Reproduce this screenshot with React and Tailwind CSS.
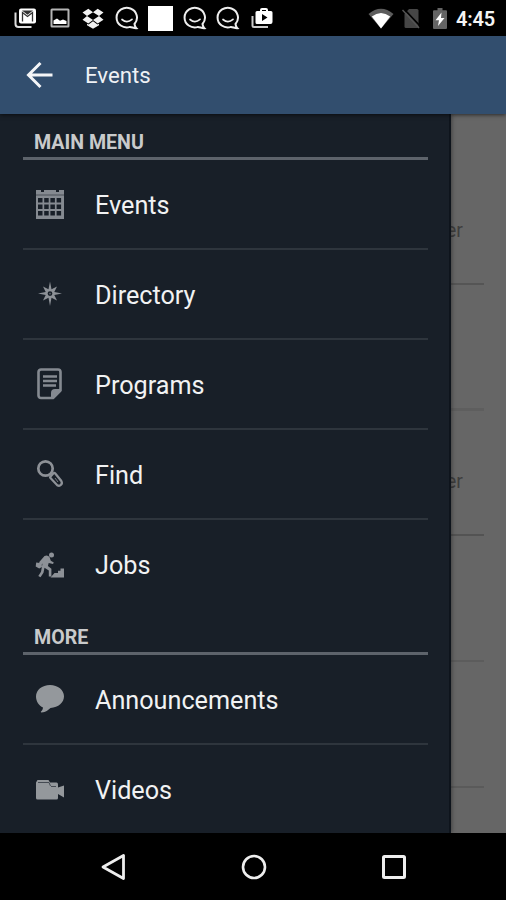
const MAIN_ITEMS = [
  { label: 'Events', Icon: CalendarIcon },
  { label: 'Directory', Icon: CompassIcon },
  { label: 'Programs', Icon: NoteIcon },
  { label: 'Find', Icon: SearchIcon },
  { label: 'Jobs', Icon: JobsIcon },
];

const MORE_ITEMS = [
  { label: 'Announcements', Icon: BubbleIcon },
  { label: 'Videos', Icon: VideoIcon },
];

function CalendarIcon() {
  return (
    <svg width="30" height="30" viewBox="0 0 30 30" fill="#858a91">
      <path
        fillRule="evenodd"
        d="M1 1h5v2h3V1h12v2h3V1h5v29H1zM3 9v4.500h4.500V9zm6.200 0v4.500h4.500V9zm6.200 0v4.500h4.500V9zm6.200 0v4.500h4.500V9zM3 15.500V20h4.500v-4.500zm6.200 0V20h4.500v-4.500zm6.200 0V20h4.500v-4.500zm6.200 0V20h4.500v-4.500zM3 22v4.500h4.500V22zm6.200 0v4.500h4.500V22zm6.200 0v4.500h4.500V22zm6.200 0v4.500h4.500V22z"
      />
      <path d="M1 6h28" stroke="#4a5058" strokeWidth="1" />
    </svg>
  );
}

function CompassIcon() {
  return (
    <svg width="30" height="30" viewBox="0 0 30 30" fill="#8d9197">
      <path
        fillRule="evenodd"
        d="M15 2.500l1.500 7.700 5.500-2.700-2.700 5.500 7.700 1.500-7.700 1.500 2.700 5.500-5.500-2.700L15 27l-1.500-8.200L8 21.500l2.700-5.500L3 14.500 10.700 13 8 7.500l5.500 2.700zM15 12.200a2.400 2.400 0 1 0 0 4.800 2.400 2.400 0 0 0 0-4.800z"
      />
      <circle cx="15" cy="14.600" r="0.9" fill="#5f656d" />
    </svg>
  );
}

function NoteIcon() {
  return (
    <svg width="30" height="34" viewBox="0 0 30 34" fill="none" stroke="#858a91">
      <path
        d="M6 2.500h17a2.500 2.500 0 0 1 2.500 2.500v18.500L18 31H6a2.500 2.500 0 0 1-2.500-2.500V5A2.500 2.500 0 0 1 6 2.500z"
        strokeWidth="2.600"
      />
      <path d="M8 9.500h14M8 14h14M8 18.500h13" strokeWidth="2.500" />
      <path d="M16 31v-5q0-4 4-4h6v2.500L19 31.500z" fill="#858a91" stroke="none" />
    </svg>
  );
}

function SearchIcon() {
  return (
    <svg width="30" height="30" viewBox="0 0 30 30" fill="none" stroke="#8d9197">
      <circle cx="10.500" cy="9.500" r="7.200" strokeWidth="2.700" />
      <path
        d="M15.500 17.500l3-3.200q1-.6 1.800.3l6 7.400q1.300 2.100-.3 3.800t-3.800.4L15.500 19q-.8-.8 0-1.500z"
        strokeWidth="2.300"
      />
      <path d="M20 19l3 4" strokeWidth="0.8" />
    </svg>
  );
}

function JobsIcon() {
  return (
    <svg width="30" height="28" viewBox="0 0 30 28" fill="#8d9197">
      <circle cx="16.500" cy="4" r="2.500" />
      <path d="M9.500 5q3-1.500 5 1l1.300 3.700 3 1.700-.8 1.700-4.300-1.200-.8 3.100 3.500 2.700v7.800h-2.600v-6l-4.300-2.700-1 5-3 4.500-2.200-1.300 2.700-4.300 1.500-8.200-1.500 1.500-1.500 1.500-1.200-1 1.200-3.700z" />
      <path d="M1.200 11.500l5.300.7.5 3.800-2.800 1.500-3.500-2z" />
      <path d="M15.500 26.500l4-4.500H23v-2.300h2.500v-2.200H29v9z" />
    </svg>
  );
}

function BubbleIcon() {
  return (
    <svg width="30" height="30" viewBox="0 0 30 30" fill="#94989c">
      <path d="M15 1c8 0 14 5 14 11.300S23.500 23.600 15.500 24c-2.500 2-4.500 4.300-9 4.500-1-.3-.8-1 0-1.500 1-.8 1.300-2 1.500-3.500C4 21.800 1 17.500 1 12.500 1 6 7 1 15 1z" />
    </svg>
  );
}

function VideoIcon() {
  return (
    <svg width="30" height="24" viewBox="0 0 30 24" fill="#94989c">
      <path d="M1 4.500L2.500 2h11L15 4.500h6.500q1.500 0 1.500 2v3L29 7.500v12l-6-3.500v4q0 1.500-1.500 1.500h-19Q1 21.500 1 20z" />
      <path d="M3 4.500h11l1.500 3.500M16 8.500h5" stroke="#454b53" strokeWidth="1" fill="none" />
    </svg>
  );
}

function MailIcon() {
  return (
    <svg width="23" height="22" viewBox="0 0 23 22">
      <path d="M1.500 5.500V17q0 3 3 3h13" fill="none" stroke="#ddd" strokeWidth="2" />
      <rect x="5" y="1.500" width="17" height="15" rx="2" fill="#fff" />
      <path d="M8.500 14.500V5.500l5 4 5-4v9" fill="none" stroke="#333" strokeWidth="1.300" />
      <path d="M8 3.500h11l-5.500 4.300z" fill="#333" />
    </svg>
  );
}

function PhotoIcon() {
  return (
    <svg width="20" height="20" viewBox="0 0 20 20">
      <rect x="1.500" y="1.500" width="17" height="17" rx="0.5" fill="none" stroke="#b4b4b4" strokeWidth="2" />
      <path d="M3.500 16v-3.500l3.500-2 3 2.200 3-1.200 3.500 1.500v3z" fill="#fff" />
    </svg>
  );
}

function DropboxIcon() {
  return (
    <svg width="22" height="21" viewBox="0 0 22 21" fill="#f2f2f2">
      <path d="M6.300.7L11 4.200 5 8 .5 4.500zM15.700.7L11 4.200 17 8l4.500-3.500zM.5 11.700L5 8l6 3.900-4.700 3.500zM21.500 11.700L17 8l-6 3.900 4.700 3.500zM11 13.300l4.500 3.300 1.500-.9v1.500l-6 3.500-6-3.500v-1.500l1.500.9z" />
    </svg>
  );
}

function ChatIcon() {
  return (
    <svg width="24" height="24" viewBox="0 0 24 24" fill="none" stroke="#eee" strokeLinecap="round">
      <path d="M19.500 18a10.200 9.800 0 1 0-4.500 2.900c2 .2 4 1.600 6.300 1.400-1.200-1.200-1.500-2.500-1.800-4.300z" strokeWidth="2" />
      <path d="M7 13.500q5 4.300 10-.1" strokeWidth="1.700" />
    </svg>
  );
}

function PlayCaseIcon() {
  return (
    <svg width="22" height="22" viewBox="0 0 22 22">
      <path d="M1.500 9v9.500q0 1.500 1.500 1.500h14" fill="none" stroke="#ccc" strokeWidth="2" />
      <path
        fillRule="evenodd"
        fill="#fff"
        d="M9 4V3q0-2 2-2h4q2 0 2 2v1h3q1.500 0 1.500 1.500v9.500q0 2-2 2H6q-1.500 0-1.500-1.500v-10Q4.500 4 6 4zm2-1v1h4V3zm0 4v7l5.500-3.500z"
      />
    </svg>
  );
}

function StatusBar() {
  const icons = [MailIcon, PhotoIcon, DropboxIcon, ChatIcon, null, ChatIcon, ChatIcon, PlayCaseIcon];

  return (
    <div className="flex h-9 items-center justify-between bg-black pl-[9px] pr-[11px]">
      <div className="flex items-center">
        {icons.map((Icon, i) => (
          <div key={i} className="flex w-[33.75px] justify-center">
            {Icon ? <Icon /> : <span className="size-[25px] bg-white" />}
          </div>
        ))}
      </div>
      <div className="flex items-center">
        <svg width="26" height="21" viewBox="0 0 26 21">
          <path d="M.5 6Q13-4.500 25.500 6L13 20.500z" fill="#5c5c5c" />
          <path d="M3.800 8.500q9.200-7 18.400 0L13 20.500z" fill="#fff" />
        </svg>
        <svg width="19" height="21" viewBox="0 0 19 21" className="ml-2">
          <path d="M7 1h8q1.500 0 1.500 1.500v16q0 1.500-1.500 1.500H4q-1.500 0-1.500-1.500V6z" fill="#464646" />
          <path d="M2 1l17 18" stroke="#000" strokeWidth="1.800" />
          <path d="M.5 2l16.500 18" stroke="#555" strokeWidth="1.500" />
        </svg>
        <svg width="14" height="21" viewBox="0 0 14 21" className="ml-3">
          <path d="M4.500 0h5v2.300H13q1 0 1 1V20q0 1-1 1H1q-1 0-1-1V3.300q0-1 1-1h3.500z" fill="#646464" />
          <path d="M8.500 4.500L2.500 12.300h3.500L5 18l6.500-8H8z" fill="#fff" />
        </svg>
        <span className="ml-[9px] w-[39px] whitespace-nowrap pt-0.5 text-[20px] leading-none font-semibold tracking-[-0.2px] text-[#f4f4f4]">
          4:45
        </span>
      </div>
    </div>
  );
}

function AppBar() {
  return (
    <header className="relative z-20 flex h-[78px] items-center bg-[#324e6e] pl-[26px] shadow-[0_1px_4px_rgba(0,0,0,0.6)]">
      <svg width="28" height="28" viewBox="0 0 28 28" fill="none" stroke="#f4f5f7" strokeWidth="3">
        <path d="M26.500 14H3M14.500 2L2.500 14l12 12" />
      </svg>
      <h1 className="ml-[31px] pt-px text-[22.200px] leading-none text-[#eef1f5]">Events</h1>
    </header>
  );
}

function SectionHeader({ title }) {
  return (
    <div className="h-[46px] shrink-0 border-b-[3px] border-[#5d636b] pl-[11px] pt-[17px]">
      <h2 className="text-[19.600px] leading-[23px] font-bold text-[#c9cacb]">{title}</h2>
    </div>
  );
}

function MenuItem({ label, Icon, last }) {
  return (
    <li
      className={
        last
          ? 'flex h-[89px] shrink-0 items-center pl-3'
          : 'flex h-[90px] shrink-0 items-center border-b-2 border-[#2e353d] pl-3'
      }
    >
      <Icon />
      <span className={last ? 'ml-[30px] pt-[3px] text-[25.200px] leading-none text-[#f1f2f3]' : 'ml-[30px] pt-1 text-[25.200px] leading-none text-[#f1f2f3]'}>
        {label}
      </span>
    </li>
  );
}

function MenuSection({ title, items }) {
  return (
    <section>
      <SectionHeader title={title} />
      <ul>
        {items.map((item, i) => (
          <MenuItem key={item.label} {...item} last={i === items.length - 1} />
        ))}
      </ul>
    </section>
  );
}

// Dimmed list that peeks out behind the open drawer
function Backdrop() {
  return (
    <div className="flex-1 bg-[#666]">
      <div className="mr-[22px] flex h-[171px] items-end border-b-2 border-[#555]">
        <span className="-ml-[5px] mb-[41px] text-[19.500px] leading-[22px] text-[#3d3d3d]">er</span>
      </div>
      <div className="mr-[22px] h-[126px] border-b-[3px] border-[#5e5e5e]" />
      <div className="mr-[22px] flex h-[125px] items-end border-b-2 border-[#535353]">
        <span className="-ml-[5px] mb-[41px] text-[19.500px] leading-[22px] text-[#3d3d3d]">er</span>
      </div>
      <div className="mr-[22px] h-[126px] border-b-2 border-[#5c5c5c]" />
      <div className="mr-[22px] h-[126px] border-b-2 border-[#5a5a5a]" />
    </div>
  );
}

function NavBar() {
  return (
    <nav className="flex h-[67px] items-center justify-between bg-black pl-[100px] pr-[99px]">
      <svg width="26" height="28" viewBox="0 0 26 28" fill="none" stroke="#eee" strokeWidth="2.800">
        <path d="M23.500 2.500v23L3 14z" strokeLinejoin="round" />
      </svg>
      <svg width="26" height="26" viewBox="0 0 26 26" fill="none" stroke="#eee" strokeWidth="2.600">
        <circle cx="13" cy="13" r="11" />
      </svg>
      <svg width="26" height="26" viewBox="0 0 26 26" fill="none" stroke="#eee" strokeWidth="3">
        <rect x="2.500" y="2.500" width="21" height="21" rx="1" />
      </svg>
    </nav>
  );
}

export default function App() {
  return (
    <div className="flex h-[900px] w-[506px] flex-col overflow-hidden bg-black font-['Roboto',sans-serif]">
      <StatusBar />
      <AppBar />
      <main className="flex h-[719px] overflow-hidden">
        <aside className="relative z-10 h-full w-[451px] shrink-0 overflow-hidden border-r-2 border-[#0e141c] bg-[#181f28] pl-[23px] pr-[21px] shadow-[1px_0_4px_rgba(0,0,0,0.35)]">
          <MenuSection title="MAIN MENU" items={MAIN_ITEMS} />
          <MenuSection title="MORE" items={MORE_ITEMS} />
        </aside>
        <Backdrop />
      </main>
      <NavBar />
    </div>
  );
}
